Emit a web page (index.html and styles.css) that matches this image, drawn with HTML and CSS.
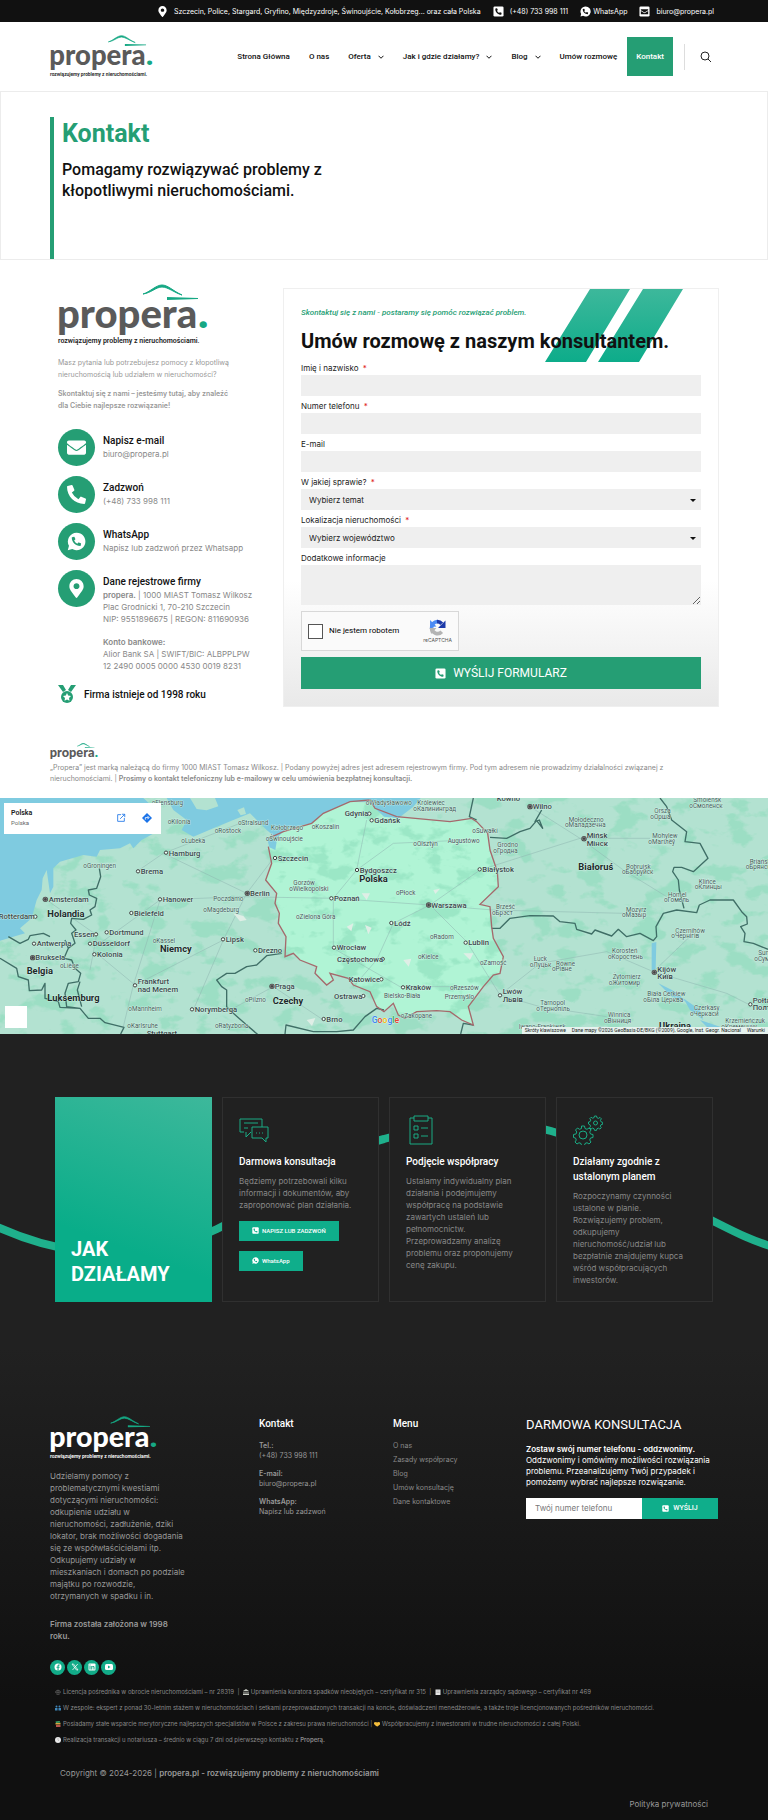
FILE: index.html
```html
<!DOCTYPE html>
<html lang="pl">
<head>
<meta charset="utf-8">
<meta name="viewport" content="width=device-width, initial-scale=1">
<title>Kontakt – propera.</title>
<link rel="stylesheet" href="styles.css">
</head>
<body>
<svg class="sprite" aria-hidden="true">
  <defs>
    <linearGradient id="stripe" x1="0" y1="0" x2="0" y2="1"><stop offset="0" stop-color="#3db89b"/><stop offset="1" stop-color="#0dac8a"/></linearGradient>
    <path id="phone-shape" d="M497.39 361.8l-112-48a24 24 0 0 0-28 6.9l-49.6 60.6A370.66 370.66 0 0 1 130.6 204.11l60.6-49.6a23.94 23.94 0 0 0 6.9-28l-48-112A24.16 24.16 0 0 0 122.6.61l-104 24A24 24 0 0 0 0 48c0 256.5 207.9 464 464 464a24 24 0 0 0 23.4-18.6l24-104a24.29 24.29 0 0 0-14.01-27.6z"/>
  </defs>
  <symbol id="i-phone-square" viewBox="0 0 24 24"><rect x="1" y="1" width="22" height="22" rx="3" fill="currentColor"/><use href="#phone-shape" class="cut" transform="translate(5 5) scale(.027)"/></symbol>
  <symbol id="i-mail-square" viewBox="0 0 24 24"><rect x="1" y="1" width="22" height="22" rx="3" fill="currentColor"/><path class="cut" d="M4 7h16v2l-8 5-8-5zM4 11l8 5 8-5v7H4z"/></symbol>
  <symbol id="i-whatsapp" viewBox="0 0 24 24"><path fill="currentColor" d="M12 1a11 11 0 0 0-9.500 16.500L1 23l5.700-1.500A11 11 0 1 0 12 1z"/><use href="#phone-shape" class="cut" transform="translate(6 6) scale(.023)"/></symbol>
  <symbol id="i-pin" viewBox="0 0 384 512"><path fill="currentColor" d="M172.268 501.67C26.97 291.031 0 269.413 0 192 0 85.961 85.961 0 192 0s192 85.961 192 192c0 77.413-26.97 99.031-172.268 309.67-9.535 13.774-29.93 13.773-39.464 0zM192 272c44.183 0 80-35.817 80-80s-35.817-80-80-80-80 35.817-80 80 35.817 80 80 80z"/></symbol>
  <symbol id="i-mail" viewBox="0 0 512 512"><path fill="currentColor" d="M502.3 190.8c3.9-3.100 9.700-.2 9.700 4.700V400c0 26.500-21.500 48-48 48H48c-26.500 0-48-21.500-48-48V195.600c0-5 5.700-7.800 9.700-4.700 22.400 17.400 52.100 39.500 154.100 113.600 21.100 15.400 56.700 47.800 92.200 47.600 35.700.3 72-32.800 92.300-47.600 102-74.100 131.600-96.300 154-113.700zM256 320c23.200.4 56.600-29.200 73.400-41.400 132.700-96.300 142.800-104.700 173.400-128.700 5.800-4.500 9.200-11.500 9.200-18.900v-19c0-26.500-21.500-48-48-48H48c-26.500 0-48 21.500-48 48v19c0 7.400 3.400 14.300 9.200 18.900 30.600 23.900 40.700 32.400 173.400 128.700 16.800 12.200 50.200 41.800 73.400 41.400z"/></symbol>
  <symbol id="i-chevron" viewBox="0 0 12 8"><path d="M1 1.500l5 5 5-5" fill="none" stroke="currentColor" stroke-width="2"/></symbol>
  <symbol id="roof" viewBox="0 0 56 16"><path d="M1 10C8 8 14 1 20 1s11 6 20 10C33 9 26 3 20 3S9 9 1 10z" fill="#16a884" stroke="#16a884" stroke-width="1"/><path d="M25 13l31 1v1l-31 1z" fill="#16a884"/></symbol>
</svg>

<div class="topbar">
  <span><svg class="ico-pin"><use href="#i-pin"/></svg>Szczecin, Police, Stargard, Gryfino, Międzyzdroje, Świnoujście, Kołobrzeg... oraz cała Polska</span>
  <a href="#"><svg><use href="#i-phone-square"/></svg>(+48) 733 998 111</a>
  <a href="#" class="tight"><svg><use href="#i-whatsapp"/></svg>WhatsApp</a>
  <a href="#"><svg><use href="#i-mail-square"/></svg>biuro@propera.pl</a>
</div>

<header class="header">
  <a href="#" class="logo logo-head"><svg viewBox="0 0 147 62" role="img" aria-label="propera"><use href="#roof" x="84" y="0" width="56" height="16"/><text x="-1" y="44" class="word">propera<tspan class="dot">.</tspan></text><text x="0" y="59" class="tag">rozwiązujemy problemy z nieruchomościami.</text></svg></a>
  <nav class="nav">
    <a href="#">Strona Główna</a>
    <a href="#">O nas</a>
    <a href="#">Oferta<svg><use href="#i-chevron"/></svg></a>
    <a href="#">Jak i gdzie działamy?<svg><use href="#i-chevron"/></svg></a>
    <a href="#">Blog<svg><use href="#i-chevron"/></svg></a>
    <a href="#">Umów rozmowę</a>
    <a href="#" class="active">Kontakt</a>
  </nav>
  <button class="search" aria-label="Szukaj"><svg viewBox="0 0 12 12"><circle cx="5" cy="5" r="4" fill="none" stroke="#222"/><path d="M8 8l3 3" stroke="#222"/></svg></button>
</header>

<section class="hero">
  <div class="hero-in">
    <h1>Kontakt</h1>
    <p>Pomagamy rozwiązywać problemy z<br>kłopotliwymi nieruchomościami.</p>
  </div>
</section>

<main class="contact">
  <div class="info">
    <div class="logo logo-main"><svg viewBox="0 0 147 62" role="img" aria-label="propera"><use href="#roof" x="84" y="0" width="56" height="16"/><text x="-1" y="44" class="word">propera<tspan class="dot">.</tspan></text><text x="0" y="59" class="tag">rozwiązujemy problemy z nieruchomościami.</text></svg></div>
    <p class="lead">Masz pytania lub potrzebujesz pomocy z kłopotliwą nieruchomością lub udziałem w nieruchomości?</p>
    <p class="lead"><b>Skontaktuj się z nami – jesteśmy tutaj, aby znaleźć dla Ciebie najlepsze rozwiązanie!</b></p>
    <ul class="ways">
      <li><span class="disc"><svg><use href="#i-mail"/></svg></span><div><h3>Napisz e-mail</h3><p>biuro@propera.pl</p></div></li>
      <li><span class="disc"><svg viewBox="0 0 512 512"><use href="#phone-shape" fill="#fff"/></svg></span><div><h3>Zadzwoń</h3><p>(+48) 733 998 111</p></div></li>
      <li><span class="disc"><svg><use href="#i-whatsapp"/></svg></span><div><h3>WhatsApp</h3><p>Napisz lub zadzwoń przez Whatsapp</p></div></li>
      <li><span class="disc"><svg><use href="#i-pin"/></svg></span><div><h3>Dane rejestrowe firmy</h3><p><b>propera.</b> | 1000 MIAST Tomasz Wilkosz<br>Plac Grodnicki 1, 70-210 Szczecin<br>NIP: 9551896675 | REGON: 811690936</p><p class="bank"><b>Konto bankowe:</b><br>Alior Bank SA | SWIFT/BIC: ALBPPLPW<br>12 2490 0005 0000 4530 0019 8231</p></div></li>
    </ul>
    <div class="since"><svg viewBox="0 0 18 18"><path fill="#259e74" d="M0 0h5l3 5-3 2zM18 0h-5l-3 5 3 2z"/><circle cx="9" cy="12" r="6" fill="#259e74"/><path fill="#fff" d="M9 8l1.200 2.600 2.800.4-2 2 .5 2.800L9 14.500l-2.500 1.300.5-2.800-2-2 2.800-.4z"/></svg><h3>Firma istnieje od 1998 roku</h3></div>
  </div>

  <form class="card">
    <svg class="stripes" viewBox="0 0 138 73" aria-hidden="true"><path fill="url(#stripe)" d="M45 0h40L41 73H0zM98 0h40L94 73H53z"/></svg>
    <p class="kicker">Skontaktuj się z nami - postaramy się pomóc rozwiązać problem.</p>
    <h2>Umów rozmowę z naszym konsultantem.</h2>
    <div class="field"><label for="f1">Imię i nazwisko <i>*</i></label><input id="f1" type="text"></div>
    <div class="field"><label for="f2">Numer telefonu <i>*</i></label><input id="f2" type="tel"></div>
    <div class="field"><label for="f3">E-mail</label><input id="f3" type="email"></div>
    <div class="field pick"><label for="f4">W jakiej sprawie? <i>*</i></label><select id="f4"><option>Wybierz temat</option></select></div>
    <div class="field pick"><label for="f5">Lokalizacja nieruchomości <i>*</i></label><select id="f5"><option>Wybierz województwo</option></select></div>
    <div class="field"><label for="f6">Dodatkowe informacje</label><textarea id="f6"></textarea></div>
    <div class="captcha"><input type="checkbox" id="rc"><label for="rc">Nie jestem robotem</label>
      <div class="rc"><svg viewBox="0 0 32 32"><path fill="none" stroke="#b4b4b4" stroke-width="7" d="M5 17a11 11 0 0 0 19 7"/><path fill="none" stroke="#4a8af4" stroke-width="7" d="M5 17A11 11 0 0 1 16 5"/><path fill="none" stroke="#1c3aa9" stroke-width="7" d="M15 5a11 11 0 0 1 9 4"/><path fill="#1c3aa9" d="M31 3v14H17z"/><path fill="#4a8af4" d="M2 2v13l12-1z"/><path fill="#b4b4b4" d="M1 17h13L4 28z"/></svg><span>reCAPTCHA</span></div>
    </div>
    <button class="submit" type="button"><svg><use href="#i-phone-square"/></svg>WYŚLIJ FORMULARZ</button>
  </form>
</main>

<section class="note">
  <div class="logo logo-small"><svg viewBox="0 0 147 52" role="img" aria-label="propera"><use href="#roof" x="84" y="0" width="56" height="16"/><text x="-1" y="44" class="word">propera<tspan class="dot">.</tspan></text></svg></div>
  <p>„Propera” jest marką należącą do firmy 1000 MIAST Tomasz Wilkosz. | Podany powyżej adres jest adresem rejestrowym firmy. Pod tym adresem nie prowadzimy działalności związanej z nieruchomościami. | <b>Prosimy o kontakt telefoniczny lub e-mailowy w celu umówienia bezpłatnej konsultacji.</b></p>
</section>

<section class="map">
  <svg class="map-svg" viewBox="0 24 2304 708" preserveAspectRatio="xMidYMid slice" role="img" aria-label="Mapa Polski">
    <defs>
      <filter id="woods" x="0" y="0" width="100%" height="100%" color-interpolation-filters="sRGB"><feTurbulence type="fractalNoise" baseFrequency=".012 .018" numOctaves="4" seed="8"/><feColorMatrix values="0 0 0 0 .53  0 0 0 0 .86  0 0 0 0 .72  9 0 0 0 -4.900"/></filter>
      <g id="c"><circle r="5" fill="#eafff6" stroke="#444" stroke-width="3"/></g>
      <g id="k"><circle r="8" fill="#444"/><circle r="5" fill="none" stroke="#ddd"/></g>
    </defs>
    <rect y="24" width="2304" height="708" fill="#b3e2d1"/>
    <path fill="#b0f4d5" d="M805 150L808 190 815 220 797 270 830 310 825 340 838 370 835 400 858 440 855 485 880 490 900 510 950 530 945 550 980 585 1000 570 990 550 1045 565 1060 585 1110 605 1130 650 1152 665 1180 640 1195 675 1215 685 1250 665 1310 662 1350 665 1385 690 1420 705 1405 650 1450 590 1480 555 1500 550 1510 500 1480 445 1475 410 1470 350 1440 343 1495 290 1492 245 1470 180 1463 130 1430 95 1415 85 1350 95 1190 80 1125 40 1050 35 970 70 935 100 850 125z"/>
    <rect y="24" width="2304" height="708" filter="url(#woods)" opacity=".5"/>
    <path fill="none" stroke="#8fb8b2" stroke-width="2" opacity=".8" d="M300 460L480 330 720 320 1000 325 1290 345 1480 360M490 190L740 310 670 450 405 585 290 490M740 310L820 205M410 245L490 190 720 100M670 450L580 660M480 330L400 585 370 710M1000 325L1070 240 1100 90M1000 325L1000 475 1200 590 1370 590M1290 345L1180 400 1130 510 1060 590M1290 345L1400 455 1500 615M1290 345L1440 240 1740 145 1950 145M1740 145L1590 50M1740 145L1870 240 2000 320M1480 360L1870 370M1500 615L1620 520 1820 485 1960 545 2080 430M1960 545L2180 610 2260 650M1500 615L1620 650 1820 680M820 590L690 660M820 590L970 690M1070 240L1180 160 1400 150M140 330L290 435 270 540"/>
    <path fill="#7fcbe0" d="M0 24H430L470 60V125L425 150 400 175 390 160 360 175 300 180 290 200 250 195 180 215 160 235V290L150 310 140 240 128 265 125 300 110 330 95 385 60 415 75 430 0 452zM500 24L520 60 560 90 545 120 580 140 640 115 700 90 750 70 800 120 830 145 860 115 935 100 970 70 1050 35 1110 35 1125 55 1152 80 1195 85 1240 50 1262 24zM800 140l30 15-4 25-18-8zM1955 460l14-4-2 80-12 6zM1975 580l60 30 20 24-40-14zM2050 625l50 35 10 30-40-30zM2100 690l60 20 10 20-50-20z"/>
    <path fill="#b3e2d1" d="M570 24h75l10 25-35 12-30-4zM712 60l20-8 6 20-16 4z"/>
    <path fill="#dfeee6" d="M700 370l30 8 10 12-20 4zM1085 310l25 0-10 20zM1040 410l20-10-6 24zM1095 405l20 8-10 20zM1210 510l24-4-8 24zM1390 490l30 0-10 20zM1300 300l20-4-14 16zM920 690l26-6-10 24z"/>
    <g fill="none" stroke="#3f6e66" stroke-width="4" stroke-linejoin="round">
      <path d="M298 235L302 260 290 295 265 300 268 315 290 325 285 350 270 360 275 375 250 388 215 385 212 400 228 420 215 430 225 460 205 475 192 505 215 510 225 535 242 550 235 575 205 580 195 610 200 650 240 655 265 685 300 685 315 698 372 712 362 732M25 440L60 460 85 448 90 437 130 430 150 440M195 450L205 475M0 505L50 535 55 560 85 570 88 602 125 600 135 580 135 625 175 635 180 652 240 655M240 575L232 600 245 650M845 490L800 497 770 525 740 530 705 550 680 550 650 570 665 590 680 600 680 650 700 670 740 705 775 735M855 732L858 705 940 725 1010 725 1060 720 1095 680 1130 655 1152 660M1420 705L1390 700 1382 732"/>
      <path d="M1470 142L1520 145 1560 125 1590 115 1610 92 1628 115 1618 90 1605 95 1625 60M1420 24L1408 80 1430 90M1980 24L2000 50 2015 90 2060 125 2055 155 2100 160 2124 205 2080 245 2045 232 2022 232 2018 245 2035 270 2038 300 2052 355M1475 415L1500 415 1530 385 1590 377 1660 378 1680 395 1725 400 1730 418 1775 432 1785 420 1835 438 1855 418 1880 440 1920 430 1960 452 1970 440 1968 410 1990 370 2030 360 2090 368 2098 345 2130 330 2200 330 2225 365 2240 380 2242 402 2222 410 2235 430 2232 455 2260 460 2304 478"/>
    </g>
    <path fill="none" stroke="#a5696c" stroke-width="4" d="M805 170L815 220 797 270 830 310 825 340 838 370 835 400 858 440 855 500 880 490 900 510 950 530 945 550 980 585 1000 570 990 550 1045 565 1060 585 1110 605 1130 650 1152 665 1180 640 1195 675 1215 685 1250 665 1310 662 1350 665 1385 690 1420 705 1405 650 1450 590 1480 555 1500 550 1510 500 1480 445 1475 410 1470 350 1440 343 1495 290 1492 245 1470 180 1463 130 1430 95 1415 85 1350 95 1190 80 1125 55 1110 30 1050 35 970 70 935 100 850 125 805 145"/>
    <g>
      <use href="#c" x="498" y="188"/><use href="#c" x="414" y="244"/><use href="#c" x="480" y="328"/><use href="#c" x="394" y="369"/><use href="#c" x="320" y="427"/><use href="#c" x="270" y="461"/><use href="#c" x="283" y="493"/><use href="#c" x="102" y="461"/><use href="#c" x="288" y="433"/><use href="#c" x="106" y="380"/><use href="#c" x="405" y="586"/><use href="#c" x="576" y="658"/><use href="#c" x="669" y="448"/><use href="#c" x="766" y="481"/><use href="#c" x="825" y="204"/><use href="#c" x="994" y="325"/><use href="#c" x="1002" y="473"/><use href="#c" x="1071" y="240"/><use href="#c" x="1115" y="91"/><use href="#c" x="1108" y="71"/><use href="#c" x="971" y="687"/><use href="#c" x="1090" y="618"/><use href="#c" x="1144" y="568"/><use href="#c" x="1148" y="507"/><use href="#c" x="1174" y="399"/><use href="#c" x="1397" y="458"/><use href="#c" x="1439" y="238"/><use href="#c" x="1209" y="592"/><use href="#c" x="1500" y="616"/><use href="#c" x="2251" y="643"/>
      <use href="#k" x="136" y="328"/><use href="#k" x="98" y="503"/><use href="#k" x="742" y="310"/><use href="#k" x="816" y="589"/><use href="#k" x="1286" y="345"/><use href="#k" x="1590" y="50"/><use href="#k" x="1752" y="146"/><use href="#k" x="1963" y="547"/>
    </g>
    <g class="city">
      <text x="506" y="197">Hamburg</text><text x="422" y="252">Brema</text><text x="488" y="336">Hanower</text><text x="402" y="377">Bielefeld</text><text x="328" y="435">Dortmund</text><text x="278" y="469">Düsseldorf</text><text x="291" y="501">Kolonia</text><text x="110" y="469">Antwerpia</text><text x="222" y="441">Essen</text><text x="-4" y="388">Rotterdam</text><text x="146" y="337">Amsterdam</text><text x="106" y="511">Bruksela</text><text x="413" y="583">Frankfurt</text><text x="413" y="605">nad Menem</text><text x="584" y="667">Norymberga</text><text x="677" y="456">Lipsk</text><text x="774" y="489">Drezno</text><text x="750" y="318">Berlin</text><text x="833" y="212">Szczecin</text><text x="1002" y="333">Poznań</text><text x="1010" y="481">Wrocław</text><text x="1079" y="248">Bydgoszcz</text><text x="1123" y="99">Gdańsk</text><text x="1034" y="79">Gdynia</text><text x="824" y="597">Praga</text><text x="979" y="695">Brno</text><text x="1002" y="626">Ostrawa</text><text x="1046" y="576">Katowice</text><text x="1011" y="515">Częstochowa</text><text x="1182" y="407">Łódź</text><text x="1294" y="354">Warszawa</text><text x="1405" y="466">Lublin</text><text x="1447" y="246">Białystok</text><text x="1217" y="600">Kraków</text><text x="1508" y="612">Lwów</text><text x="1508" y="635">Львів</text><text x="1598" y="58">Wilno</text><text x="1490" y="32">Kowno</text><text x="1760" y="143">Mińsk</text><text x="1760" y="167">Мінск</text><text x="1972" y="545">Kijów</text><text x="1972" y="568">Київ</text><text x="2258" y="638">Połtawa</text><text x="2258" y="660">Полтава</text><text x="440" y="739">Stuttgart</text>
    </g>
    <g class="town">
      <text x="455" y="44">oFlensburg</text><text x="503" y="103">oKilonia</text><text x="544" y="158">oLubeka</text><text x="644" y="130">oRostock</text><text x="714" y="104">oStralsund</text><text x="813" y="119">Kołobrzego</text><text x="935" y="118">oKoszalin</text><text x="797" y="153">oŚwinoujście</text><text x="1097" y="45">oWładysławowo</text><text x="250" y="235">oGroningen</text><text x="640" y="333">Poczdamo</text><text x="610" y="365">oMagdeburg</text><text x="880" y="284">Gorzów</text><text x="868" y="302">oWielkopolski</text><text x="888" y="386">oZielona Góra</text><text x="458" y="458">oKassel</text><text x="180" y="533">oLiège</text><text x="385" y="662">oMannheim</text><text x="382" y="714">oKarlsruhe</text><text x="645" y="713">oRatyzbona</text><text x="735" y="635">oPilzno</text><text x="1240" y="168">oOlsztyn</text><text x="1343" y="160">Augustówo</text><text x="1417" y="128">oSuwałki</text><text x="1188" y="314">oPłock</text><text x="1290" y="447">oRadom</text><text x="1254" y="508">oKielce</text><text x="1440" y="524">oZamość</text><text x="1350" y="600">oRzeszów</text><text x="1334" y="628">Przemyślo</text><text x="1152" y="624">Bielsko-Biała</text><text x="1202" y="683">oZakopane</text><text x="1252" y="46">Królewiec</text><text x="1240" y="63">oКалининград</text><text x="1492" y="172">Grodno</text><text x="1480" y="189">oГродна</text><text x="1706" y="95">Mołodeczno</text><text x="1695" y="112">oМаладзечна</text><text x="1963" y="70">Orsza</text><text x="1951" y="88">oОрша</text><text x="2080" y="36">Smoleńsk</text><text x="2068" y="53">oСмоленск</text><text x="1957" y="145">Mohylew</text><text x="1945" y="162">oМагілёў</text><text x="1878" y="236">Bobrujsk</text><text x="1866" y="253">oБабруйск</text><text x="2249" y="221">Briańsk</text><text x="2237" y="238">oБрянск</text><text x="2096" y="281">Klińce</text><text x="2084" y="298">oКлинцы</text><text x="2004" y="320">Homel</text><text x="1992" y="337">oГомель</text><text x="1488" y="358">Brześć</text><text x="1476" y="375">oБрэст</text><text x="1878" y="365">Mozyrz</text><text x="1866" y="382">oМазыр</text><text x="2026" y="428">Czernihów</text><text x="2014" y="445">oЧернігів</text><text x="1836" y="490">Korosteń</text><text x="1824" y="507">oКоростень</text><text x="1601" y="513">Łuck</text><text x="1589" y="530">oЛуцьк</text><text x="1668" y="528">Równe</text><text x="1656" y="544">oРівне</text><text x="1838" y="568">Żytomierz</text><text x="1826" y="585">oЖитомир</text><text x="1621" y="646">Tarnopol</text><text x="1609" y="663">oТернопіль</text><text x="1942" y="619">Biała Cerkiew</text><text x="1930" y="636">oБіла Церква</text><text x="1824" y="682">Winnica</text><text x="1812" y="699">oВінниця</text><text x="2082" y="660">Czerkasy</text><text x="2070" y="677">oЧеркаси</text><text x="2176" y="699">Krzemieńczuk</text><text x="2164" y="716">oКременчук</text><text x="2275" y="496">Sumy</text><text x="2263" y="512">oСуми</text><text x="1556" y="716">Iwano-Frankiwsk</text>
    </g>
    <g class="land">
      <text x="142" y="382">Holandia</text><text x="80" y="553">Belgia</text><text x="142" y="634">Luksemburg</text><text x="480" y="486">Niemcy</text><text x="818" y="641">Czechy</text><text x="1078" y="276">Polska</text><text x="1735" y="240">Białoruś</text><text x="1977" y="716">Ukraina</text>
    </g>
    <text x="1115" y="698" class="goog"><tspan fill="#4285f4">G</tspan><tspan fill="#ea4335">o</tspan><tspan fill="#fbbc05">o</tspan><tspan fill="#4285f4">g</tspan><tspan fill="#34a853">l</tspan><tspan fill="#ea4335">e</tspan></text>
  </svg>
  <div class="place"><div><b>Polska</b><span>Polska</span></div><a href="#" aria-label="Otwórz"><svg viewBox="0 0 12 12"><path fill="none" stroke="#1a73e8" d="M6 2H2v8h8V6M7 1.500h3.500V5M10.500 1.500L5 7"/></svg></a><a href="#" aria-label="Trasa"><svg viewBox="0 0 12 12"><path fill="#1a73e8" d="M6 0l6 6-6 6-6-6z"/><path fill="none" stroke="#fff" d="M4 8V5.500h4M6.500 3.500l2 2-2 2"/></svg></a></div>
  <button class="layer" aria-label="Widok satelitarny"></button>
  <div class="credits"><span>Skróty klawiszowe</span><span>Dane mapy ©2026 GeoBasis-DE/BKG (©2009), Google, Inst. Geogr. Nacional</span><span>Warunki</span></div>
</section>

<div class="dark">
<section class="how">
  <svg class="wave" viewBox="0 0 768 357" preserveAspectRatio="none" aria-hidden="true"><path d="M-5 192C30 208 55 214 80 217C140 222 180 213 217 195C290 160 330 118 384 105C440 88 500 83 551 97C610 113 650 155 713 187C735 198 750 206 773 213" fill="none" stroke="#1fb08c" stroke-width="8"/></svg>
  <div class="step first"><h2>JAK<br>DZIAŁAMY</h2></div>
  <div class="step">
    <svg class="glyph" viewBox="0 0 30 30"><path d="M7 17v5l5-5M5 17H1V4h22v8M5 8h14M5 13h4M13 12h16v11h-2v4l-4-4H13zM17 18h1M20 18h1M23 18h1"/></svg>
    <h3>Darmowa konsultacja</h3>
    <p>Będziemy potrzebowali kilku informacji i dokumentów, aby zaproponować plan działania.</p>
    <a href="#" class="mini"><svg><use href="#i-phone-square"/></svg>NAPISZ LUB ZADZWOŃ</a>
    <a href="#" class="mini"><svg><use href="#i-whatsapp"/></svg>WhatsApp</a>
  </div>
  <div class="step">
    <svg class="glyph" viewBox="0 0 30 30"><path d="M8 3H4v26h22V3h-4M8 1h14v5H8zM8 11h4v4H8zM8 19h4v4H8zM15 13h7M15 21h7"/></svg>
    <h3>Podjęcie współpracy</h3>
    <p>Ustalamy indywidualny plan działania i podejmujemy współpracę na podstawie zawartych ustaleń lub pełnomocnictw. Przeprowadzamy analizę problemu oraz proponujemy cenę zakupu.</p>
  </div>
  <div class="step">
    <svg class="glyph" viewBox="0 0 30 30"><circle cx="10" cy="20" r="4"/><circle cx="22.500" cy="8" r="2"/><path d="M8.500 11h3l.5 2.500 2 .8 2-1.300 2 2-1.300 2 .8 2 2.500.5v3l-2.500.5-.8 2 1.300 2-2 2-2-1.300-2 .8-.5 2h-3l-.5-2-2-.8-2 1.300-2-2 1.300-2-.8-2L.5 22.500v-3L3 19l.8-2-1.300-2 2-2 2 1.300 2-.8zM21.500 1h2l.4 1.700 1.600.7 1.500-1 1.400 1.400-1 1.500.7 1.600 1.500.4v2l-1.600.4-.7 1.500 1 1.500-1.400 1.400-1.500-1-1.500.7-.4 1.600h-2l-.4-1.600-1.600-.7-1.500 1-1.300-1.400.9-1.500-.7-1.500L15.500 9V7l1.600-.4.7-1.500-1-1.500 1.300-1.300 1.500.9 1.500-.6z"/></svg>
    <h3>Działamy zgodnie z ustalonym planem</h3>
    <p>Rozpoczynamy czynności ustalone w planie. Rozwiązujemy problem, odkupujemy nieruchomość/udział lub bezpłatnie znajdujemy kupca wśród współpracujących inwestorów.</p>
  </div>
</section>

<footer class="footer">
  <div class="cols">
    <div class="about">
      <div class="logo logo-foot"><svg viewBox="0 0 147 62" role="img" aria-label="propera"><use href="#roof" x="84" y="0" width="56" height="16"/><text x="-1" y="44" class="word">propera<tspan class="dot">.</tspan></text><text x="0" y="59" class="tag">rozwiązujemy problemy z nieruchomościami.</text></svg></div>
      <p>Udzielamy pomocy z problematycznymi kwestiami dotyczącymi nieruchomości: odkupienie udziału w nieruchomości, zadłużenie, dziki lokator, brak możliwości dogadania się ze współwłaścicielami itp. Odkupujemy udziały w mieszkaniach i domach po podziale majątku po rozwodzie, otrzymanych w spadku i in.</p>
      <p class="founded"><b>Firma została założona w 1998 roku.</b></p>
      <div class="social">
        <a href="#" aria-label="Facebook"><svg viewBox="0 0 16 16"><circle cx="8" cy="8" r="7" fill="#fff"/><path fill="#12ab88" d="M7 15V9.500H5v-2h2V6c0-2 1.200-3 3-3l1.500.2V5h-1C9.500 5 9.200 5.500 9.200 6.200v1.300h2.200l-.4 2H9.200V15z"/></svg></a>
        <a href="#" aria-label="X"><svg viewBox="0 0 16 16"><path d="M2 2l9 12h3L5 2zM13.500 2L3 14" fill="none" stroke="#fff" stroke-width="1.500"/></svg></a>
        <a href="#" aria-label="LinkedIn"><svg viewBox="0 0 16 16"><rect x="1" y="1" width="14" height="14" rx="2" fill="#fff"/><path fill="#12ab88" d="M3 6h2v7H3zM3 3h2v2H3zM6.500 6h2v1c1-1.600 4.500-1.600 4.500 1.500V13h-2V9c0-1.800-2.500-1.800-2.500 0v4h-2z"/></svg></a>
        <a href="#" aria-label="YouTube"><svg viewBox="0 0 16 16"><rect y="2" width="16" height="12" rx="3" fill="#fff"/><path fill="#12ab88" d="M6 5l5 3-5 3z"/></svg></a>
      </div>
    </div>
    <div class="col">
      <h3>Kontakt</h3>
      <p><b>Tel.:</b><br>(+48) 733 998 111</p>
      <p><b>E-mail:</b><br>biuro@propera.pl</p>
      <p><b>WhatsApp:</b><br>Napisz lub zadzwoń</p>
    </div>
    <div class="col menu">
      <h3>Menu</h3>
      <a href="#">O nas</a><a href="#">Zasady współpracy</a><a href="#">Blog</a><a href="#">Umów konsultację</a><a href="#">Dane kontaktowe</a>
    </div>
    <div class="call">
      <h2>DARMOWA KONSULTACJA</h2>
      <p><b>Zostaw swój numer telefonu - oddzwonimy.</b><br>Oddzwonimy i omówimy możliwości rozwiązania problemu. Przeanalizujemy Twój przypadek i pomożemy wybrać najlepsze rozwiązanie.</p>
      <form><input type="tel" placeholder="Twój numer telefonu" aria-label="Twój numer telefonu"><button type="button"><svg><use href="#i-phone-square"/></svg>WYŚLIJ</button></form>
    </div>
  </div>
  <ul class="legal">
    <li><svg viewBox="0 0 12 12"><path d="M6 1v9M3 11h6M1 6l2-3h6l2 3M1 6c0 3 4 3 4 0zM7 6c0 3 4 3 4 0z" fill="none" stroke="#777"/></svg>Licencja pośrednika w obrocie nieruchomościami – nr 28319 &nbsp;|&nbsp; <svg viewBox="0 0 12 12"><path fill="#c9cdc5" d="M6 0l6 4H0zM1 5h2v5H1zM5 5h2v5H5zM9 5h2v5H9zM0 10h12v2H0z"/></svg>Uprawnienia kuratora spadków nieobjętych – certyfikat nr 315 &nbsp;|&nbsp; <svg viewBox="0 0 12 12"><path fill="#e4e4e4" d="M1 1h10v11H1z"/><path stroke="#999" d="M3 4h6M3 7h6"/></svg>Uprawnienia zarządcy sądowego – certyfikat nr 469</li>
    <li><svg viewBox="0 0 12 12"><g fill="#3f86b8"><circle cx="3" cy="3" r="2"/><circle cx="9" cy="3" r="2"/><path d="M0 6h5v5H0zM7 6h5v5H7z"/></g></svg>W zespole: ekspert z ponad 30-letnim stażem w nieruchomościach i setkami przeprowadzonych transakcji na koncie, doświadczeni menedżerowie, a także troje licencjonowanych pośredników nieruchomości.</li>
    <li><svg viewBox="0 0 12 12"><path fill="#3fa66a" d="M1 1l8-1 2 3-9 1z"/><path fill="#d9a441" d="M1 4h10v3H1z"/><path fill="#b8554c" d="M2 8h9v4H2z"/></svg>Posiadamy stałe wsparcie merytoryczne najlepszych specjalistów w Polsce z zakresu prawa nieruchomości | <svg viewBox="0 0 12 12"><path fill="#f3bd3b" d="M0 3l4-1 2 1 3-1 3 1v4l-5 4-3-1-4-4z"/></svg>Współpracujemy z inwestorami w trudne nieruchomości z całej Polski.</li>
    <li><svg viewBox="0 0 12 12"><circle cx="6" cy="6" r="6" fill="#e8e8e8"/><path d="M6 2v4l2 2" fill="none" stroke="#999"/></svg>Realizacja transakcji u notariusza – średnio w ciągu 7 dni od pierwszego kontaktu z <b>Properą.</b></li>
  </ul>
  <p class="copy">Copyright © 2024-2026 | <b>propera.pl - rozwiązujemy problemy z nieruchomościami</b></p>
  <a href="#" class="privacy">Polityka prywatności</a>
</footer>
</div>
</body>
</html>
```
FILE: styles.css
```css
* { box-sizing: border-box; margin: 0; padding: 0; }
:root { --green: #259e74; --mint: #0fae8b; --head: Roboto, "Open Sans", sans-serif; }
body { font-family: Inter, "Noto Sans", sans-serif; font-size: 8px; line-height: 12px; color: #888; background: #fff; }
a { color: inherit; text-decoration: none; }
ul { list-style: none; }
button, input, select, textarea { font: inherit; color: inherit; border: 0; border-radius: 0; }
h1, h2, h3 { font-family: var(--head); }
h3 { font-size: 10px; line-height: 15px; font-weight: 500; color: #111; }
b { font-weight: 600; }
.sprite { position: absolute; width: 0; height: 0; }

.topbar { display: flex; justify-content: flex-end; align-items: center; gap: 12px; height: 22px; padding: 0 54px; background: #111; color: #fff; font-size: 7px; line-height: 21px; white-space: nowrap; --cut: #111; }
.topbar span, .topbar a { display: flex; align-items: center; gap: 6px; }
.topbar .tight { gap: 2px; }
.topbar svg { width: 11px; height: 11px; }
.cut { fill: var(--cut); }

.header { display: flex; align-items: center; height: 69px; padding: 0 50px; }
.logo svg { display: block; width: 100%; overflow: visible; }
.logo-head { width: 101px; }
.word { font: 900 40px Lato, sans-serif; fill: #5a5a5a; }
.dot { font-family: Roboto, sans-serif; fill: #16a884; }
.tag { font: 600 7px Roboto, sans-serif; fill: #222; }
.nav { display: flex; align-items: center; gap: 1px; margin-left: auto; font: 500 8px/39px var(--head); color: #111; white-space: nowrap; }
.nav a { padding: 0 9px; }
.nav svg { width: 6px; height: 4px; margin-left: 7px; vertical-align: middle; }
.nav .active { background: var(--green); color: #fff; }
.search { margin-left: 11px; padding: 0 6px 0 15px; height: 26px; border-left: 1px solid #ddd; background: none; }
.search svg { display: block; width: 12px; height: 12px; }

.hero { border: 1px solid #ececec; padding: 25px 49px 0; }
.hero-in { min-height: 142px; border-left: 4px solid var(--green); padding: 1px 0 0 8px; }
.hero h1 { font-size: 25px; line-height: 32px; font-weight: 700; color: var(--green); }
.hero p { margin-top: 9px; font: 500 16px/21px var(--head); color: #111; }

.contact { display: grid; grid-template-columns: 233px 1fr; align-items: start; padding: 28px 49px 0 50px; }
.info { padding-left: 8px; }
.logo-main { width: 147px; margin-top: -4px; margin-bottom: 11px; }
.lead { max-width: 176px; font-size: 7px; line-height: 12px; margin-bottom: 7px; color: #999; }
.ways { margin-top: 17px; display: grid; gap: 10px; }
.ways li { display: flex; gap: 8px; }
.ways li > div { padding-top: 4px; }
.ways p, .since h3 { white-space: nowrap; }
.ways .bank { margin-top: 11px; }
.disc { flex: none; display: grid; place-items: center; width: 37px; height: 37px; border-radius: 50%; background: var(--green); color: #fff; --cut: var(--green); }
.disc svg { width: 19px; height: 19px; }
.since { display: flex; align-items: center; gap: 8px; margin-top: 13px; }
.since svg { width: 18px; height: 18px; }

.card { position: relative; padding: 17px; border: 1px solid #efefef; background: linear-gradient(#fff 70%, #e9e9e9); color: #222; }
.stripes { position: absolute; right: 35px; top: 0; width: 138px; height: 73px; }
.kicker { position: relative; font: italic 500 8px/14px var(--head); color: var(--green); }
.card h2 { position: relative; margin: 9px 0 9px; font-size: 20px; line-height: 24px; font-weight: 700; color: #111; white-space: nowrap; }
.field { position: relative; margin-bottom: 4px; }
.field label { display: block; line-height: 13px; }
.field i { font-style: normal; color: #e02020; margin-left: 2px; }
.field input, .field select, .field textarea { display: block; width: 100%; height: 21px; padding: 0 8px; background: #efefef; appearance: none; }
.field textarea { height: 40px; }
.pick::after { content: ""; position: absolute; right: 5px; bottom: 8px; border: 3px solid transparent; border-top-color: #111; border-bottom: 0; }
.captcha { display: flex; align-items: center; width: 158px; height: 40px; margin-top: 6px; padding: 0 6px; border: 1px solid #d8d8d8; background: #fafafa; }
.captcha input { appearance: none; width: 15px; height: 15px; border: 1px solid #555; background: #fff; }
.captcha label { margin-left: 6px; font: 400 8px/12px var(--head); color: #000; }
.rc { margin-left: auto; display: grid; justify-items: center; font-size: 5px; line-height: 8px; color: #555; }
.rc svg { width: 17px; height: 17px; }
.submit { display: flex; align-items: center; justify-content: center; gap: 7px; width: 100%; height: 32px; margin-top: 6px; background: var(--green); color: #fff; font: 400 12px/32px var(--head); --cut: var(--green); }
.submit svg { width: 11px; height: 11px; }

.note { padding: 36px 50px 14px; font-size: 7px; line-height: 11px; }
.logo-small { width: 47px; margin-bottom: 2px; }

.map { position: relative; height: 236px; overflow: hidden; font-family: Roboto, sans-serif; }
.map-svg { display: block; width: 100%; height: 100%; }
.map text { font-family: Roboto, sans-serif; paint-order: stroke; stroke: #dff8ee; stroke-width: 2px; }
.city { font-size: 23px; font-weight: 500; fill: #37474a; }
.town { font-size: 19px; fill: #3c5856; }
.land { font-size: 28px; font-weight: 700; fill: #1c2a2b; }
.map .goog { font-size: 26px; font-weight: 500; }
.place { position: absolute; left: 4px; top: 5px; display: flex; align-items: center; gap: 13px; width: 157px; height: 31px; padding: 0 8px 0 7px; background: #fff; }
.place div { flex: 1; display: grid; font-size: 6px; line-height: 10px; color: #666; }
.place b { font-size: 7px; color: #222; }
.place a { display: grid; place-items: center; width: 13px; height: 16px; }
.place svg { width: 10px; height: 10px; }
.layer { position: absolute; left: 5px; bottom: 6px; width: 22px; height: 22px; background: #fff; }
.credits { position: absolute; right: 0; bottom: 0; display: flex; gap: 6px; padding: 0 3px; background: #e6f2ee; color: #222; font-size: 5px; line-height: 7px; white-space: nowrap; }

.dark { background: linear-gradient(#212121 40%, #101010 85%); }
.how { position: relative; display: grid; grid-template-columns: repeat(4, 1fr); gap: 10px; padding: 63px 55px 89px; }
.wave { position: absolute; left: 0; top: 0; width: 100%; height: 357px; }
.step { position: relative; min-height: 205px; padding: 17px 16px 12px; border: 1px solid #303030; background: #212121; --cut: var(--mint); }
.first { display: flex; align-items: flex-end; padding-bottom: 15px; border: 0; background: linear-gradient(20deg, #09ad89 30%, #3db89b); }
.first h2 { color: #fff; font-size: 20px; line-height: 25px; font-weight: 700; }
.glyph { display: block; width: 30px; height: 30px; fill: none; stroke: #1aab84; stroke-width: 1; }
.step h3 { margin: 9px 0 6px; color: #fff; }
.mini { display: flex; align-items: center; gap: 3px; width: max-content; height: 20px; margin-top: 10px; padding: 0 13px; background: var(--mint); color: #fff; font: 500 6px/20px var(--head); }
.mini svg { width: 7px; height: 7px; }

.footer { padding: 25px 50px 10px; color: #999; }
.cols { display: grid; grid-template-columns: 209px 134px 133px minmax(0, 1fr); }
.about { padding-right: 73px; }
.logo-foot { width: 105px; margin-bottom: 10px; }
.logo-foot .word, .logo-foot .tag { fill: #fff; }
.logo-foot .dot { fill: #16a884; }
.founded { margin-top: 16px; }
.social { display: flex; gap: 2px; margin-top: 18px; }
.social a { display: grid; place-items: center; width: 15px; height: 15px; border-radius: 50%; background: #12ab88; }
.social svg { width: 8px; height: 8px; }
.col { font-size: 7px; line-height: 10px; }
.col h3, .call h2 { color: #fff; }
.col h3 { margin-bottom: 10px; }
.col p { margin-bottom: 8px; }
.menu a { display: block; margin-bottom: 4px; color: #8a8a8a; }
.call { color: #fff; line-height: 11px; }
.call h2 { margin-bottom: 11px; font-size: 13px; line-height: 17px; font-weight: 400; white-space: nowrap; }
.call form { display: flex; margin-top: 10px; }
.call input { flex: 1; min-width: 0; height: 21px; padding: 0 9px; background: #fff; color: #222; }
.call input::placeholder { color: #777; opacity: 1; }
.call button { display: flex; align-items: center; justify-content: center; gap: 4px; width: 76px; background: var(--mint); color: #fff; font: 500 7px/21px var(--head); --cut: var(--mint); }
.call button svg { width: 7px; height: 7px; }
.legal { margin-top: 12px; padding-left: 5px; font-size: 6px; line-height: 10px; color: #8a8a8a; white-space: nowrap; }
.legal li { margin-bottom: 6px; }
.legal svg { width: 6px; height: 6px; margin-right: 2px; vertical-align: middle; }
.copy { margin: 22px 0 19px; padding-left: 10px; }
.privacy { display: block; padding-right: 10px; text-align: right; }
```
